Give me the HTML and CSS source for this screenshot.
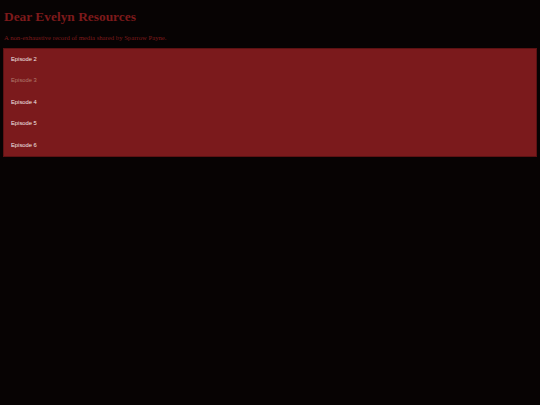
FILE: index.html
```html
<!DOCTYPE html>
<html>
<head>
<meta charset="utf-8">
<link rel="stylesheet" href="styles.css">
</head>
<body>
<header class="head">
  <h1 class="title">Dear Evelyn Resources</h1>
  <p class="subtitle">A non-exhaustive record of media shared by Sparrow Payne.</p>
</header>
<ul class="episodes">
  <li class="ep">Episode 2</li>
  <li class="ep ep-dim">Episode 3</li>
  <li class="ep">Episode 4</li>
  <li class="ep">Episode 5</li>
  <li class="ep">Episode 6</li>
</ul>
</body>
</html>
```

FILE: styles.css
```css
html, body {
  margin: 0;
  padding: 0;
  background: #070303;
}
body {
  padding: 0 3px;
  font-family: "Liberation Serif", serif;
}
.head {
  padding: 0 1px;
}
.title {
  margin: 0;
  padding-top: 9px;
  font-size: 13.4px;
  line-height: 16px;
  font-weight: bold;
  color: #7d1a1b;
}
.subtitle {
  margin: 9px 0 0;
  font-size: 6.7px;
  line-height: 8px;
  color: #7d1a1b;
}
.episodes {
  list-style: none;
  margin: 6px 0 0;
  padding: 0;
  background: #7b1a1c;
  border: 1px solid #5c1213;
  font-family: "Liberation Sans", sans-serif;
}
.ep {
  height: 21.4px;
  line-height: 21.4px;
  padding-left: 7px;
  font-size: 5.8px;
  color: #f2e6e6;
}
.ep-dim {
  color: #b07a6e;
}
```
